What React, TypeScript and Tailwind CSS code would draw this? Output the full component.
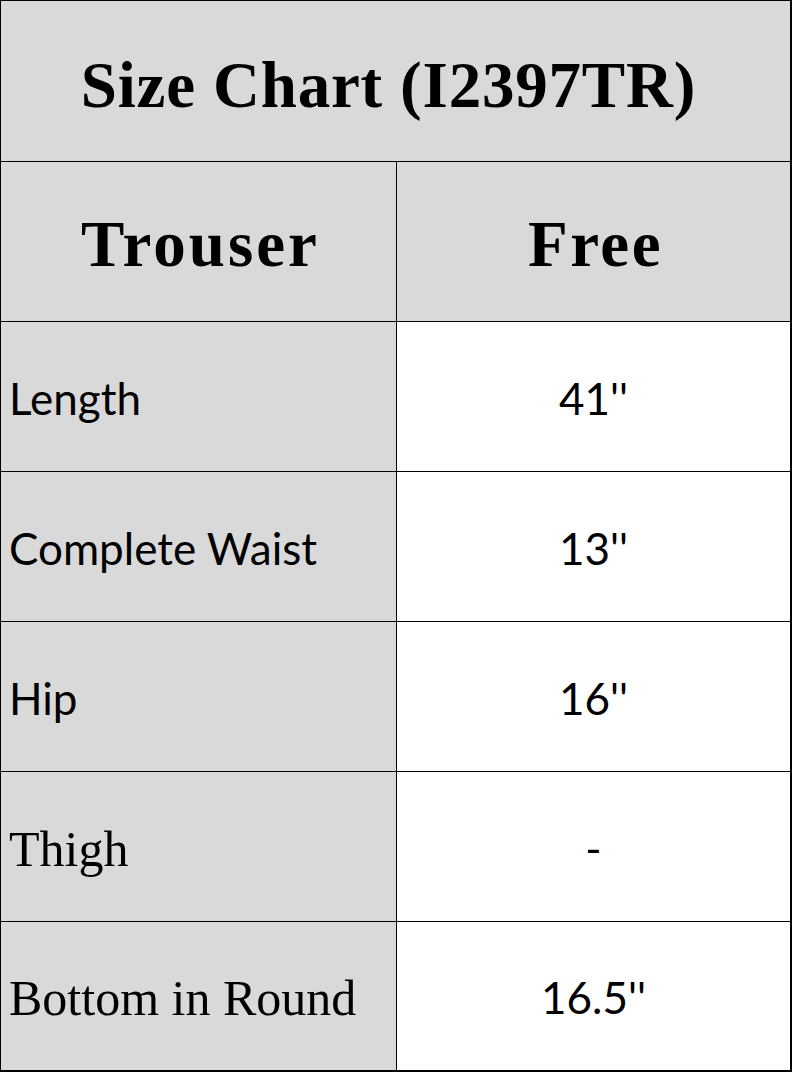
import React from "react";

const serif = "font-['Liberation_Serif',serif]";
const sans = "font-['Lato',sans-serif]";

type Row = { label: string; value: string; serifLabel?: boolean };

const rows: Row[] = [
  { label: "Length", value: "41''" },
  { label: "Complete Waist", value: "13''" },
  { label: "Hip", value: "16''" },
  { label: "Thigh", value: "-", serifLabel: true },
  { label: "Bottom in Round", value: "16.5''", serifLabel: true },
];

export default function App() {
  return (
    <div className="w-[793px] h-[1073px] bg-white text-black">
      <div className="w-[792px] border-l border-t border-black flex flex-col">
        <div className="h-[161px] bg-[#d9d9d9] border-r-2 border-b border-black flex items-center justify-center">
          <span className={`${serif} font-bold text-[65px] tracking-[0.8px] leading-none pt-[8px] pr-[14px]`}>
            Size Chart (I2397TR)
          </span>
        </div>
        <div className="flex h-[160px] border-b border-black">
          <div className="w-[396px] bg-[#d9d9d9] border-r border-black flex items-center justify-center">
            <span className={`${serif} font-bold text-[65px] tracking-[3px] leading-none pt-[6px] pl-[4px]`}>Trouser</span>
          </div>
          <div className="flex-1 bg-[#d9d9d9] border-r-2 border-black flex items-center justify-center">
            <span className={`${serif} font-bold text-[65px] tracking-[2.5px] leading-none pt-[6px] pl-[4px]`}>Free</span>
          </div>
        </div>
        {rows.map((r, i) => (
          <div
            key={r.label}
            className={`flex h-[150px] border-black ${i === rows.length - 1 ? "border-b-2" : "border-b"}`}
          >
            <div className="w-[396px] bg-[#d9d9d9] border-r border-black flex items-center pl-[8px]">
              <span
                className={
                  r.serifLabel
                    ? `${serif} text-[50px] leading-none pt-[4px]`
                    : `${sans} text-[44px] leading-none pt-[2px]`
                }
              >
                {r.label}
              </span>
            </div>
            <div className="flex-1 bg-white border-r-2 border-black flex items-center justify-center">
              <span className={`${sans} text-[44px] leading-none pt-[2px]`}>{r.value}</span>
            </div>
          </div>
        ))}
      </div>
    </div>
  );
}
